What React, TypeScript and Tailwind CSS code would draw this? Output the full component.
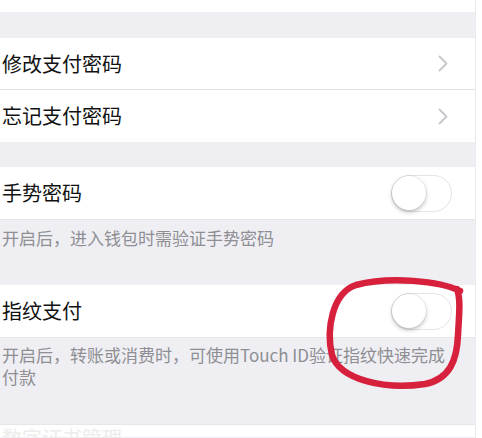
import React from "react";

const font = { fontFamily: '"Noto Sans CJK SC", "Noto Sans", sans-serif' };

function Chevron() {
  return (
    <svg width="10" height="17" viewBox="0 0 10 17" fill="none">
      <polyline points="1.5,1.5 8.5,8.5 1.5,15.5" stroke="#c7c7cc" strokeWidth="1.8" strokeLinecap="round" strokeLinejoin="round" />
    </svg>
  );
}

function Toggle() {
  return (
    <div className="relative h-[37px] w-[61px] rounded-full border-[1.5px] border-[#e3e3e8] bg-white">
      <div className="absolute left-0 top-0 h-[34px] w-[34px] rounded-full bg-white shadow-[0_2px_4px_rgba(0,0,0,0.25),0_0_0_0.5px_rgba(0,0,0,0.08)]" />
    </div>
  );
}

function LinkRow({ label, border }: { label: string; border?: boolean }) {
  return (
    <div className={`flex h-[52px] items-center justify-between bg-white pl-[2px] pr-[27px] ${border ? "border-b border-[#e2e2e6]" : ""}`}>
      <span className="text-[20px] text-[#111]">{label}</span>
      <Chevron />
    </div>
  );
}

function SwitchRow({ label }: { label: string }) {
  return (
    <div className="flex h-[52px] items-center justify-between bg-white pl-[2px] pr-[23px]">
      <span className="text-[20px] text-[#111]">{label}</span>
      <Toggle />
    </div>
  );
}

export default function App() {
  return (
    <div className="relative flex h-[438px] w-[482px] overflow-hidden bg-white" style={font}>
      <div className="flex w-[476px] flex-col border-r border-[#ebebee] bg-[#efeef3]">
        <div className="h-[12px] bg-white" />
        <div className="h-[26px]" />
        <LinkRow label="修改支付密码" border />
        <LinkRow label="忘记支付密码" />
        <div className="h-[25px]" />
        <SwitchRow label="手势密码" />
        <div className="h-[66px] border-t border-[#e6e6ea] pl-[2px] pt-[7px] text-[17px] leading-[22px] text-[#8e8e93]">
          开启后，进入钱包时需验证手势密码
        </div>
        <SwitchRow label="指纹支付" />
        <div className="h-[87px] border-t border-[#e6e6ea] pl-[2px] pt-[6px] text-[17px] leading-[22px] text-[#8e8e93]">
          开启后，转账或消费时，可使用Touch ID验证指纹快速完成
          <br />
          付款
        </div>
        <div className="flex h-[13px] items-start overflow-visible border-t border-[#e6e6ea] bg-white pl-[2px]">
          <span className="text-[20px] leading-[26px] text-[#ececec]">数字证书管理</span>
        </div>
      </div>
      <svg className="pointer-events-none absolute left-0 top-0" width="482" height="438" viewBox="0 0 482 438">
        <path
          d="M 460 291 C 440 281, 390 276, 356 285 C 332 293, 326 330, 332 355 C 340 380, 385 390, 425 384 C 450 379, 457 360, 458 335 C 459 315, 461 300, 457 289"
          stroke="#d7203c"
          strokeWidth="6.5"
          fill="none"
          strokeLinecap="round"
          strokeLinejoin="round"
        />
      </svg>
    </div>
  );
}
